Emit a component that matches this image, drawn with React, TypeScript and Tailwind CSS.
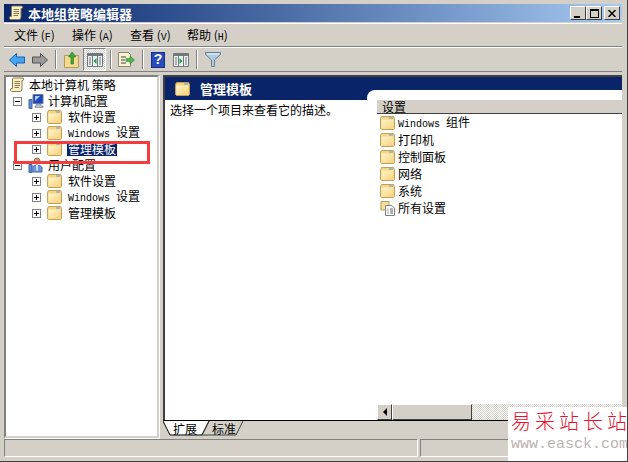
import React from 'react';

const cjk = { fontFamily: '"Noto Sans CJK SC", sans-serif' };

const Folder = ({ className = '' }: { className?: string }) => (
  <svg width="15" height="14" viewBox="0 0 15 14" className={`shrink-0 ${className}`}>
    <defs>
      <linearGradient id="folderFill" x1="0" y1="0" x2="1" y2="1">
        <stop offset="0" stopColor="#fff6cf" />
        <stop offset="1" stopColor="#f6d27a" />
      </linearGradient>
    </defs>
    <path d="M.5 2.5 L1.5 .5 H13.5 L14.5 2.5 V12.5 L13.5 13.5 H1.5 L.5 12.5 Z" fill="#f4d686" stroke="#c2a056" />
    <path d="M1.5 3.5 H13.5 V12.5 H1.5 Z" fill="url(#folderFill)" />
    <path d="M9 1.5 H13 V2.5 H9 Z" fill="#5b9fdc" />
  </svg>
);

const Expander = ({ open = false }: { open?: boolean }) => (
  <span className="relative block w-[9px] h-[9px] border border-[#808080] bg-white shrink-0">
    <span className="absolute left-[1px] top-[3px] w-[5px] h-[1px] bg-black" />
    {!open && <span className="absolute left-[3px] top-[1px] w-[1px] h-[5px] bg-black" />}
  </span>
);

const Scroll = () => (
  <svg width="16" height="16" viewBox="0 0 16 16" className="shrink-0">
    <path d="M4 1 H14 Q15.5 2 14 3.5 H13 V12 Q13 14.5 11 14.5 H2.5 Q0.5 13.5 2 11.5 H3.5 V3 Q3.5 1 4 1 Z" fill="#fbf0c8" stroke="#8a7a50" />
    <path d="M5.5 4.5 H11 M5.5 6.5 H11 M5.5 8.5 H11 M5.5 10.5 H10" stroke="#8a7a50" />
  </svg>
);

const Computer = () => (
  <svg width="16" height="16" viewBox="0 0 16 16" className="shrink-0">
    <path d="M5 1.5 H15 V10.5 H5 Z" fill="#1c46c8" stroke="#70788c" />
    <path d="M7 3 L12 3 L7 8 Z" fill="#a8d4ff" />
    <path d="M8 11 H13 V13 H15 V14.5 H7 V13 H8 Z" fill="#b8bcc8" stroke="#70788c" strokeWidth=".6" />
    <path d="M1 6.5 H4 V15.5 H1 Z" fill="#5c8ed8" stroke="#44689c" />
  </svg>
);

const User = () => (
  <svg width="16" height="16" viewBox="0 0 16 16" className="shrink-0">
    <path d="M1 7.5 H4 V15.5 H1 Z" fill="#5c8ed8" stroke="#44689c" />
    <circle cx="9" cy="4" r="3" fill="#c89870" stroke="#805838" strokeWidth=".7" />
    <path d="M4 15 V10.5 Q5 8 9 8 Q13 8 14 10.5 V15 Z" fill="#6c94d8" stroke="#4c6ca4" />
    <path d="M8 8 H10 L9.5 14 H8.5 Z" fill="#e8f0ff" />
  </svg>
);

const Sep = ({ mx }: { mx: string }) => <span className={`block w-[2px] h-[19px] border-l border-r border-l-[#808080] border-r-white shrink-0 ${mx}`} />;

const Latin = ({ children }: { children: React.ReactNode }) => (
  <span className="text-[10px]" style={{ fontFamily: '"Liberation Mono", monospace' }}>{children}</span>
);

const PanelIcon = ({ arrow }: { arrow: 'left' | 'right' }) => (
  <svg width="16" height="14" viewBox="0 0 16 14">
    <path d="M.5 .5 H15.5 V13.5 H.5 Z" fill="#eef0f0" stroke="#707880" />
    <path d="M1 1 H15 V3 H1 Z" fill="#707880" />
    <path d="M2 5 H4 M2 7 H4 M2 9 H4 M2 11 H4 M12 5 H14 M12 7 H14 M12 9 H14 M12 11 H14 M5.5 3 V13 M10.5 3 V13" stroke="#707880" />
    <path d={arrow === 'left' ? 'M9.5 5 V11 L6.5 8 Z' : 'M6.5 5 V11 L9.5 8 Z'} fill="#20a040" />
  </svg>
);

const Toolbar = () => (
  <div className="h-[25px] border-b border-b-[#808080] border-t border-t-white flex items-center pl-[5px] shrink-0">
    <svg width="16" height="14" viewBox="0 0 16 14" className="ml-0">
      <path d="M.5 7 L7.5 .5 V4 H15.5 V10 H7.5 V13.5 Z" fill="#45a5f0" stroke="#1860b8" />
    </svg>
    <svg width="16" height="14" viewBox="0 0 16 14" className="ml-[7px]">
      <path d="M15.5 7 L8.5 .5 V4 H.5 V10 H8.5 V13.5 Z" fill="#9a9a9a" stroke="#505050" />
    </svg>
    <Sep mx="ml-[7px]" />
    <svg width="15" height="17" viewBox="0 0 15 17" className="ml-[7px]">
      <path d="M.5 4.5 H14.5 V16.5 H.5 Z" fill="#f6d98c" stroke="#b69a5c" />
      <path d="M7 13 V6 H4.5 L8 1 L12 6 H9.5 V13 Z" fill="#3aa838" stroke="#20781f" strokeWidth=".6" />
    </svg>
    <span className="ml-[4px] w-[23px] h-[23px] flex items-center justify-center border border-t-[#808080] border-l-[#808080] border-r-white border-b-white bg-[repeating-conic-gradient(#d4d0c8_0_25%,#fff_0_50%)] bg-[length:2px_2px]">
      <PanelIcon arrow="left" />
    </span>
    <Sep mx="ml-[4px]" />
    <svg width="17" height="15" viewBox="0 0 17 15" className="ml-[6px]">
      <path d="M.5 .5 H10.5 L12.5 2.5 V14.5 H.5 Z" fill="#fbf3d4" stroke="#8a8a70" />
      <path d="M3 5 H8 M3 8 H7 M3 11 H8" stroke="#404040" />
      <path d="M8 6.5 H12 V4 L16.5 8 L12 12 V9.5 H8 Z" fill="#50b848" stroke="#308030" strokeWidth=".6" />
    </svg>
    <Sep mx="ml-[7px]" />
    <span className="ml-[7px] w-[14px] h-[16px] flex items-center justify-center bg-[#2a4cb8] border border-[#15308a] text-white text-[14px] font-bold" style={{ fontFamily: '"Liberation Sans", sans-serif' }}>?</span>
    <span className="ml-[8px] flex"><PanelIcon arrow="right" /></span>
    <Sep mx="ml-[7px]" />
    <svg width="16" height="15" viewBox="0 0 16 15" className="ml-[7px]">
      <path d="M.5 .5 H15.5 V2.5 L9.5 8 V14.5 H6.5 V8 L.5 2.5 Z" fill="#b4cce0" stroke="#5f7f96" />
      <path d="M2 2 H14" stroke="#eef4f8" />
    </svg>
  </div>
);

const TreeRow = ({ level, children, icon, open }: { level: number; children: React.ReactNode; icon: React.ReactNode; open?: boolean }) => (
  <div className={`h-[16px] flex items-center text-[12px] leading-none ${level === 1 ? 'pl-[7px]' : 'pl-[26px]'}`}>
    <Expander open={open} />
    <span className="ml-[6px] flex">{icon}</span>
    {children}
  </div>
);

const settings = ['打印机', '控制面板', '网络', '系统'];

const ListRow = ({ children, icon }: { children: React.ReactNode; icon?: React.ReactNode }) => (
  <div className="h-[17px] flex items-center pl-[3px] text-[12px] leading-none">
    {icon ?? <Folder />}
    <span className="ml-[3px] whitespace-nowrap">{children}</span>
  </div>
);

export default function App() {
  return (
    <div className="relative w-[628px] h-[462px] overflow-hidden bg-[#d4d0c8] text-black flex flex-col pt-[4px] pl-[4px] pr-[5px] pb-[4px] border-r border-b border-[#404040]" style={cjk}>
      {/* title bar */}
      <div className="h-[18px] shrink-0 flex items-center pl-[4px] pr-[2px] bg-gradient-to-r from-[#0a246a] to-[#a6caf0]">
        <Scroll />
        <span className="ml-[4px] text-white text-[13px] font-bold leading-none">本地组策略编辑器</span>
        <div className="ml-auto flex">
          {['min', 'max', 'close'].map((b) => (
            <span key={b} className={`w-[16px] h-[14px] flex items-center justify-center bg-[#d4d0c8] border border-t-white border-l-white border-r-[#404040] border-b-[#404040] ${b === 'close' ? 'ml-[2px]' : ''}`}>
              {b === 'min' && <span className="block w-[6px] h-[2px] bg-black mt-[7px] mr-[3px]" />}
              {b === 'max' && <span className="block w-[9px] h-[9px] border border-black border-t-2" />}
              {b === 'close' && (
                <svg width="8" height="7" viewBox="0 0 8 7"><path d="M.5 0 L7.5 7 M7.5 0 L.5 7" stroke="#000" strokeWidth="1.4" /></svg>
              )}
            </span>
          ))}
        </div>
      </div>

      {/* menu */}
      <div className="mt-[1px] h-[24px] shrink-0 border-t border-t-white border-b border-b-[#808080] flex items-center pl-[10px] text-[12px]">
        <span className="w-[58px]">文件 (<Latin>F</Latin>)</span>
        <span className="w-[58px]">操作 (<Latin>A</Latin>)</span>
        <span className="w-[57px]">查看 (<Latin>V</Latin>)</span>
        <span>帮助 (<Latin>H</Latin>)</span>
      </div>
      <Toolbar />

      {/* panes */}
      <div className="mt-[3px] flex-1 min-h-0 flex gap-[4px]">
        <div className="w-[155px] bg-white border-2 border-t-[#808080] border-l-[#808080] border-r-[#d4d0c8] border-b-[#d4d0c8] shadow-[1px_1px_0_#fff]">
          <div className="h-[16px] flex items-center pl-[3px] text-[12px] leading-none">
            <Scroll />
            <span className="ml-[4px]">本地计算机 策略</span>
          </div>
          <TreeRow level={1} open icon={<Computer />}><span className="ml-[4px]">计算机配置</span></TreeRow>
          <TreeRow level={2} icon={<Folder />}><span className="ml-[6px]">软件设置</span></TreeRow>
          <TreeRow level={2} icon={<Folder />}><span className="ml-[6px]"><Latin>Windows </Latin>设置</span></TreeRow>
          <TreeRow level={2} icon={<Folder />}><span className="ml-[5px] px-[1px] h-[14px] flex items-center bg-[#0a246a] text-white">管理模板</span></TreeRow>
          <TreeRow level={1} open icon={<User />}><span className="ml-[4px]">用户配置</span></TreeRow>
          <TreeRow level={2} icon={<Folder />}><span className="ml-[6px]">软件设置</span></TreeRow>
          <TreeRow level={2} icon={<Folder />}><span className="ml-[6px]"><Latin>Windows </Latin>设置</span></TreeRow>
          <TreeRow level={2} icon={<Folder />}><span className="ml-[6px]">管理模板</span></TreeRow>
        </div>

        <div className="flex-1 min-w-0 flex flex-col">
          <div className="flex-1 min-h-0 flex flex-col border-t-2 border-l-2 border-[#404040] bg-white">
            <div className="h-[23px] shrink-0 bg-[#0a246a] flex items-center">
              <span className="ml-[10px] flex"><Folder /></span>
              <span className="ml-[10px] text-white text-[13px] font-bold leading-none flex-1">管理模板</span>
              <span className="self-end w-[255px] h-[10px] bg-white rounded-tl-[8px]" />
            </div>
            <div className="flex-1 min-h-0 flex">
              <div className="flex-1 pl-[5px] pt-[2px] text-[12px] leading-[16px]">选择一个项目来查看它的描述。</div>
              <div className="w-[245px] flex flex-col">
                <div className="h-[14px] bg-[#d4d0c8] border-b border-[#404040] pl-[5px] text-[12px] leading-[13px] shrink-0">设置</div>
                <div className="flex-1 min-h-0">
                  <ListRow><Latin>Windows </Latin>组件</ListRow>
                  {settings.map((s) => <ListRow key={s}>{s}</ListRow>)}
                  <ListRow
                    icon={
                      <svg width="15" height="16" viewBox="0 0 15 16" className="shrink-0">
                        <path d="M1 1.5 H9 V10 H1 Z" fill="#f9df9a" stroke="#b69a5c" />
                        <path d="M5.5 5.5 H12 L14.5 8 V15.5 H5.5 Z" fill="#fff" stroke="#808080" />
                        <path d="M7.5 9 H8.5 M10 9 H13 M7.5 11 H8.5 M10 11 H13 M7.5 13 H8.5 M10 13 H13" stroke="#606060" />
                      </svg>
                    }
                  >
                    所有设置
                  </ListRow>
                </div>
                <div className="h-[16px] shrink-0 flex bg-[repeating-conic-gradient(#d4d0c8_0_25%,#fff_0_50%)] bg-[length:2px_2px]">
                  <span className="w-[15px] flex items-center justify-center bg-[#d4d0c8] border border-t-white border-l-white border-r-[#404040] border-b-[#404040]">
                    <span className="block w-0 h-0 border-y-[4px] border-y-transparent border-r-[4px] border-r-black" />
                  </span>
                  <span className="w-[80px] bg-[#d4d0c8] border border-t-white border-l-white border-r-[#404040] border-b-[#404040]" />
                </div>
              </div>
            </div>
          </div>
          <div className="h-[16px] shrink-0 border-t border-black flex items-start text-[12px] leading-[15px] mb-[2px]">
            <svg width="82" height="15" viewBox="0 0 82 15" className="shrink-0 -mr-[82px]">
              <path d="M0 0 L7 14 H39 L46 0 Z" fill="#fff" />
              <path d="M0 0 L7 14 H39 L46 0" fill="none" stroke="#000" />
              <path d="M46 0 L39 14 H73 L80 0" fill="none" stroke="#404040" />
            </svg>
            <span className="relative ml-[10px]">扩展</span>
            <span className="relative ml-[15px]">标准</span>
          </div>
        </div>
      </div>

      {/* status bar */}
      <div className="mt-[1px] h-[18px] shrink-0 flex gap-[2px]">
        <span className="flex-1 border border-t-[#808080] border-l-[#808080] border-r-white border-b-white" />
        <span className="w-[100px] border border-t-[#808080] border-l-[#808080] border-r-white border-b-white" />
        <span className="w-[100px] border border-t-[#808080] border-l-[#808080] border-r-white border-b-white" />
      </div>

      {/* annotation */}
      <div className="absolute left-[14px] top-[141px] w-[136px] h-[23px] border-[3px] border-[#f33c3c]" />

      {/* watermark */}
      <div className="absolute left-[508px] top-[407px] w-[120px] h-[55px] bg-white pl-[3px]">
        <div className="flex gap-[4px] text-[20px] leading-[24px] mt-[2px] text-[#e8102c] whitespace-nowrap font-light" style={{ fontFamily: '"Noto Sans CJK SC", serif' }}>
          {['易', '采', '站', '长', '站'].map((c, i) => <span key={i}>{c}</span>)}
        </div>
        <div className="text-[15px] leading-[18px] mt-[3px] text-[#c0b0b0] whitespace-nowrap" style={{ fontFamily: '"Liberation Mono", monospace' }}>www.easck.com</div>
      </div>
    </div>
  );
}
